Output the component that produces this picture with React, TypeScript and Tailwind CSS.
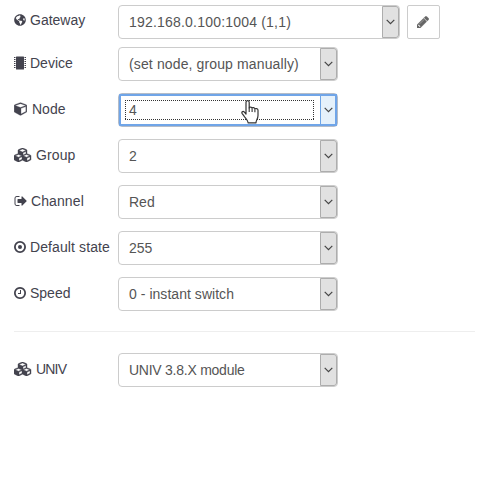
import type { ReactNode } from "react";
import { FaGlobeAmericas } from "react-icons/fa";

function Glyph({ d, box, className, weight = 0 }: { d: string; box: string; className: string; weight?: number }) {
  return (
    <svg
      viewBox={box}
      className={`shrink-0 ${className}`}
      fill="currentColor"
      stroke={weight ? "currentColor" : "none"}
      strokeWidth={weight}
      aria-hidden="true"
    >
      <path d={d} />
    </svg>
  );
}

const CUBE =
  "M896 1629l640-349v-636l-640 233v752zm-64-865l698-254-698-254-698 254zm832-252v768q0 35-18 65t-49 47l-704 384q-28 16-61 16t-61-16l-704-384q-31-17-49-47t-18-65v-768q0-40 23-73t61-47l704-256q22-8 44-8t44 8l704 256q38 14 61 47t23 73z";
const CUBES =
  "M640 1632l384-192v-314l-384 164v342zm-64-454l404-173-404-173-404 173zm1088 454l384-192v-314l-384 164v342zm-64-454l404-173-404-173-404 173zm-448-293l384-165v-266l-384 164v267zm-64-379l441-189-441-189-441 189zm1088 518v416q0 36-19 67t-52 47l-448 224q-25 14-57 14t-57-14l-448-224q-4-2-7-4-2 2-7 4l-448 224q-25 14-57 14t-57-14l-448-224q-33-16-52-47t-19-67v-416q0-38 21.5-70t56.5-48l434-186v-400q0-38 21.5-70t56.5-48l448-192q23-10 50-10t50 10l448 192q35 16 56.5 48t21.5 70v400l434 186q36 16 57 48t21 70z";
const SIGN_OUT =
  "M704 1440q0 4 1 20t.5 26.5-3 23.5-10 19.5-20.5 6.5h-320q-119 0-203.5-84.5t-84.5-203.5v-704q0-119 84.5-203.5t203.5-84.5h320q13 0 22.5 9.5t9.5 22.5q0 4 1 20t.5 26.5-3 23.5-10 19.5-20.5 6.5h-320q-66 0-113 47t-47 113v704q0 66 47 113t113 47h312l11.5 1 11.5 3 8 5.5 7 9 2 13.5zm928-544q0 26-19 45l-544 544q-19 19-45 19t-45-19-19-45v-288h-448q-26 0-45-19t-19-45v-384q0-26 19-45t45-19h448v-288q0-26 19-45t45-19 45 19l544 544q19 19 19 45z";
const CLOCK =
  "M1024 544v448q0 14-9 23t-23 9h-320q-14 0-23-9t-9-23v-64q0-14 9-23t23-9h224v-352q0-14 9-23t23-9h64q14 0 23 9t9 23zm416 352q0-148-73-273t-198-198-273-73-273 73-198 198-73 273 73 273 198 198 273 73 273-73 198-198 73-273zm224 0q0 209-103 385.5t-279.5 279.5-385.5 103-385.5-103-279.5-279.5-103-385.5 103-385.5 279.5-279.5 385.5-103 385.5 103 279.5 279.5 103 385.5z";
const PENCIL =
  "M491 1536l91-91-235-235-91 91v107h128v128h107zm523-928q0-22-22-22-10 0-17 7l-542 542q-7 7-7 17 0 22 22 22 10 0 17-7l542-542q7-7 7-17zm-54-192l416 416-832 832h-416v-416zm683 96q0 53-37 90l-166 166-416-416 166-165q36-38 90-38 53 0 91 38l235 234q37 39 37 91z";

const cubes = <Glyph d={CUBES} box="0 0 2304 1792" className="h-[14px] w-[18px]" weight={50} />;

function Chip() {
  return (
    <svg viewBox="0 0 12 14" className="h-[14px] w-3 shrink-0" fill="currentColor" aria-hidden="true">
      <rect x="2" y="0.5" width="8" height="13" rx="0.5" />
      {[1, 3, 5, 7, 9, 11].map((y) => (
        <path key={y} d={`M0 ${y}h1.5v1H0zM10.5 ${y}H12v1h-1.5z`} />
      ))}
    </svg>
  );
}

function Target() {
  return (
    <svg viewBox="0 0 12 12" className="size-3 shrink-0" aria-hidden="true">
      <circle cx="6" cy="6" r="5.1" fill="none" stroke="currentColor" strokeWidth="1.8" />
      <circle cx="6" cy="6" r="2" fill="currentColor" />
    </svg>
  );
}

function HandCursor() {
  return (
    <svg viewBox="0 0 18 24" className="absolute top-[6px] left-[122px] h-6 w-[18px]" aria-hidden="true">
      <path
        d="M5 14V2.5C5 1.3 5.8 .7 6.6 .7S8.2 1.3 8.2 2.5V8C8.2 6.8 11 6.7 11.1 8.2C11.3 7.2 13.8 7.4 13.9 9C14.3 8.2 17 8.3 17 10.2V15.5C17 19 15 20 15 22.8H7.2C6.8 20 4.3 18.2 3.1 16.2L1.2 13.6C.2 12 1.9 10.9 3.2 11.9L5 14Z"
        fill="white"
        stroke="#333"
        strokeWidth="1.2"
        strokeLinejoin="round"
      />
      <path d="M8.2 7.5V12M11.1 8.5V12M13.9 9.2V12.3" stroke="#333" strokeWidth="1.1" />
    </svg>
  );
}

interface SelectProps {
  value: string;
  wide?: boolean;
  focused?: boolean;
  tracking?: string;
}

function Select({ value, wide, focused, tracking = "" }: SelectProps) {
  return (
    <div
      className={`relative flex h-[34px] shrink-0 rounded-[4px] border bg-white text-[#555] ${
        wide ? "w-[282px]" : "w-[220px]"
      } ${focused ? "border-[#b4bcc8]" : "border-[#ccc]"}`}
    >
      <span className={`flex-1 pl-[10px] text-[14px] leading-[33px] whitespace-nowrap ${tracking}`}>{value}</span>
      <span
        className={`flex w-[17px] shrink-0 items-center justify-center border ${
          focused ? "border-[#6ea5e6] bg-[#e5f1fb]" : "rounded-r-[3px] border-[#adadad] bg-[#e1e1e1]"
        }`}
      >
        <svg viewBox="0 0 9 6" className="h-[6px] w-[9px] shrink-0" aria-hidden="true">
          <path d="M0.7 0.8L4.5 4.6L8.3 0.8" fill="none" stroke="#444" strokeWidth="1.2" />
        </svg>
      </span>
      {focused && (
        <>
          <span className="pointer-events-none absolute inset-0 rounded-[1px] border-2 border-[#70a5e8]" />
          <svg className="pointer-events-none absolute top-[6px] left-[6px] h-5 w-[189px]" aria-hidden="true">
            <path
              d="M0 0.5H189M0 19.5H189M0.5 0V20M188.5 0V20"
              fill="none"
              stroke="#333"
              strokeDasharray="1 1"
            />
          </svg>
          <HandCursor />
        </>
      )}
    </div>
  );
}

interface RowProps {
  icon: ReactNode;
  label: string;
  raised?: boolean;
  tracking?: string;
  children: ReactNode;
}

function Row({ icon, label, raised, tracking = "", children }: RowProps) {
  return (
    <div className="flex h-[34px]">
      <div
        className={`flex w-[104px] shrink-0 items-center gap-1 text-[14px] whitespace-nowrap ${
          raised ? "h-[30px]" : "h-8"
        } ${tracking}`}
      >
        {icon}
        <span>{label}</span>
      </div>
      {children}
    </div>
  );
}

export default function App() {
  return (
    <div className="h-[503px] w-[490px] overflow-hidden bg-white pt-[5px] pr-[15px] pl-[14px] font-['Liberation_Sans',Arial,sans-serif] text-[#43434e]">
      <Row icon={<FaGlobeAmericas className="size-3 shrink-0" />} label="Gateway" raised>
        <Select value="192.168.0.100:1004 (1,1)" wide tracking="tracking-[0.2px]" />
        <button className="ml-[7px] flex h-[34px] w-[33px] items-center justify-center rounded-[2px] border border-[#ccc] bg-white pr-px text-[#666]">
          <Glyph d={PENCIL} box="128 128 1536 1536" className="size-3" weight={40} />
        </button>
      </Row>
      <div className="mt-2 flex flex-col gap-3">
        <Row icon={<Chip />} label="Device">
          <Select value="(set node, group manually)" tracking="tracking-[0.13px]" />
        </Row>
        <Row
          icon={<Glyph d={CUBE} box="-20 90 1704 1740" className="mr-px h-[14px] w-[13px]" weight={40} />}
          label="Node"
        >
          <Select value="4" focused />
        </Row>
        <Row icon={cubes} label="Group" tracking="tracking-[0.1px]">
          <Select value="2" />
        </Row>
        <Row
          icon={<Glyph d={SIGN_OUT} box="0 0 1664 1792" className="h-[14px] w-[13px]" />}
          label="Channel"
          tracking="tracking-[0.1px]"
        >
          <Select value="Red" />
        </Row>
        <Row icon={<Target />} label="Default state" tracking="tracking-[0.1px]">
          <Select value="255" />
        </Row>
        <Row icon={<Glyph d={CLOCK} box="128 128 1536 1536" className="size-3" />} label="Speed">
          <Select value="0 - instant switch" tracking="tracking-[0.04px]" />
        </Row>
      </div>
      <hr className="mt-5 mb-[21px] border-t border-[#eee]" />
      <Row icon={cubes} label="UNIV" tracking="tracking-[-0.8px]">
        <Select value="UNIV 3.8.X module" tracking="tracking-[-0.25px]" />
      </Row>
    </div>
  );
}
